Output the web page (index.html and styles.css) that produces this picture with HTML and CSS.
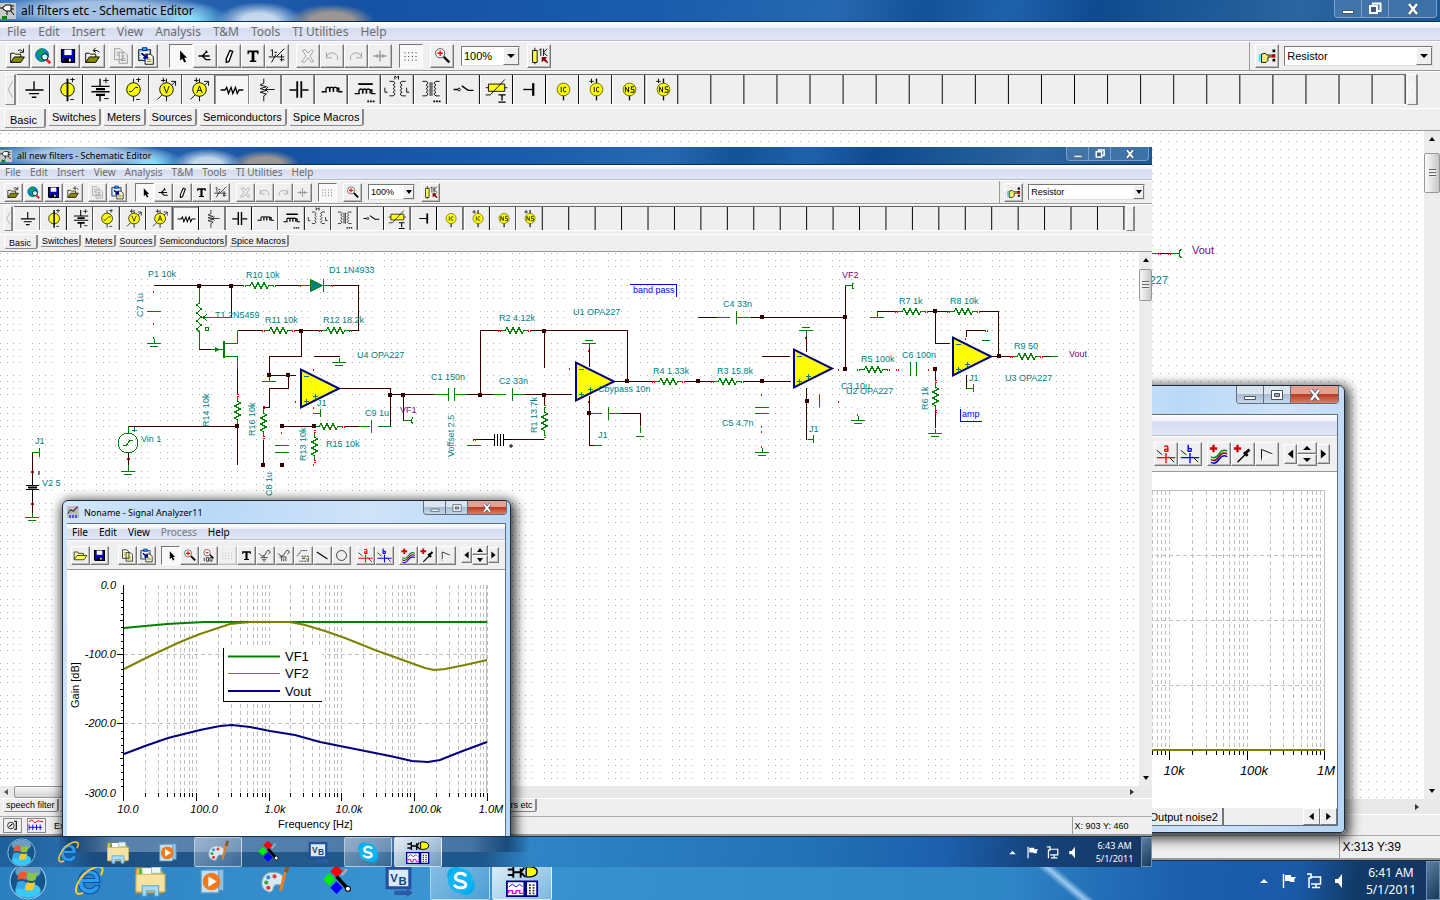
FILE: index.html
```html
<!DOCTYPE html>
<html lang="en">
  <head>
    <meta charset="UTF-8" />
    <meta name="viewport" content="width=device-width, initial-scale=1.0" />
    <title>all filters etc - Schematic Editor</title>
    <link rel="stylesheet" href="styles.css" />
  </head>
  <body>
    <!-- icon sprite -->
    <svg class="sprite" aria-hidden="true">
      <!-- toolbar, 24 x 24 -->
      <symbol id="open" viewBox="0 0 24 24"><path d="M4 9h4l1 1h6v3" fill="#ff9" stroke="#000"/><path d="M4 19l4-6h11l-4 6z" fill="#880" stroke="#000"/><path d="M4 9v10" stroke="#000"/><path d="M12 6q3-2 5 1m1-3v4h-4" fill="none" stroke="#000"/></symbol>
      <symbol id="openb" viewBox="0 0 24 24"><path d="M4 9h4l1 1h6v3" fill="#ff9" stroke="#000"/><path d="M4 19l4-6h11l-4 6z" fill="#880" stroke="#000"/><path d="M4 9v10" stroke="#000"/><path d="M19 8q-2-3-6-2m2-3l-3 3 3 2" fill="none" stroke="#000"/></symbol>
      <symbol id="open3" viewBox="0 0 24 24"><path d="M3 17V7h5l1 2h7v3" fill="#ff9" stroke="#000"/><path d="M3 18l4-6h14l-4 6z" fill="#ff6" stroke="#000"/></symbol>
      <symbol id="web" viewBox="0 0 24 24"><circle cx="11" cy="11" r="7" fill="#08c" stroke="#068"/><path d="M6 8l4-4 3 3-3 4-3-1zM9 13l4 1-1 4-4-2z" fill="#0a4"/><circle cx="14" cy="13" r="3.500" fill="#cff" stroke="#000"/><path d="M16 16l4 4" stroke="#e22" stroke-width="3"/></symbol>
      <symbol id="save" viewBox="0 0 24 24"><path d="M5 5h14v14H6l-1-1z" fill="#00c" stroke="#000" stroke-width="1.500"/><path d="M8 5h8v6H8z" fill="#fff"/><path d="M8 14h8v5H8z" fill="#000"/><path d="M13 15h2v3h-2z" fill="#fff"/></symbol>
      <symbol id="copy" viewBox="0 0 24 24"><path d="M5 4h6l3 3v9H5zM10 8h6l3 3v9h-9zM12 12h4M12 15h5M12 17h5M7 8h3M7 11h3" fill="#eee" stroke="#999"/></symbol>
      <symbol id="copy2" viewBox="0 0 24 24"><path d="M5 4h6l3 3v9H5zM10 8h6l3 3v9h-9z" fill="#ffd" stroke="#000"/><path d="M12 13h4M12 15h5M12 17h5M7 8h3M7 11h3" stroke="#880"/></symbol>
      <symbol id="paste" viewBox="0 0 24 24"><path d="M4 5h13v12H4z" fill="#fff" stroke="#000"/><path d="M5 6h11v10H5z" fill="none" stroke="#48c" stroke-dasharray="1 1" stroke-width="2"/><path d="M8 3h5v3H8z" fill="#0cf" stroke="#00a"/><path d="M11 10h6l3 3v8h-9z" fill="#ffd" stroke="#000"/><path d="M13 14h3M13 16h5M13 18h5" stroke="#880"/><path d="M7 9l6 5m0-4v4H9" stroke="#008" stroke-width="2" fill="none"/></symbol>
      <symbol id="pointer" viewBox="0 0 24 24"><path d="M11 6v11l2.500-2 2 4 2-1-2-4h3z" fill="#000"/></symbol>
      <symbol id="wire" viewBox="0 0 24 24"><path d="M5 12h8M9 12l4-4h1l-1-2M9 12l4 4h5M13 12h4" stroke="#000" stroke-width="1.500" fill="none"/></symbol>
      <symbol id="pencil" viewBox="0 0 24 24"><path d="M13 6l3 1-4 11-3 1v-4z" fill="#fff" stroke="#000" stroke-width="1.500"/></symbol>
      <symbol id="text" viewBox="0 0 24 24"><path d="M6 6h12v4h-1l-1-2h-2.500v9h2v1.500h-7V17h2V8H8l-1 2H6z" fill="#000"/></symbol>
      <symbol id="half" viewBox="0 0 24 24"><path d="M5 6l2-1v7M3 13h8l9-9M11 10l-5 9M12 13h8M17 10v8M15 16h5M9 8h3" stroke="#000" fill="none"/></symbol>
      <symbol id="del" viewBox="0 0 24 24"><path d="M6 6l3-1 3 4 4-4 2 2-4 5 4 6-2 1-4-5-4 5-3-1 5-6z" fill="#f4f4f4" stroke="#999"/></symbol>
      <symbol id="undo" viewBox="0 0 24 24"><path d="M6 13q3-6 8-4t4 7M6 8v6h6" fill="none" stroke="#999"/></symbol>
      <symbol id="redo" viewBox="0 0 24 24"><path d="M18 13q-3-6-8-4t-4 7M18 8v6h-6" fill="none" stroke="#999"/></symbol>
      <symbol id="break" viewBox="0 0 24 24"><path d="M5 12h14M12 6v12M9 10v4M15 10v4" fill="none" stroke="#999" stroke-width="1.500"/></symbol>
      <symbol id="dots" viewBox="0 0 24 24"><path d="M5 8.500h15M5 12.500h15M5 16.500h15" stroke="#000" stroke-dasharray="1 3"/></symbol>
      <symbol id="zoom" viewBox="0 0 24 24"><circle cx="10" cy="9" r="5" fill="#fff" stroke="#444"/><path d="M10 6v6M7 9h6" stroke="#f00" stroke-width="1.500"/><path d="M14 13l6 6" stroke="#000" stroke-width="2.500"/></symbol>
      <symbol id="zoom100" viewBox="0 0 24 24"><circle cx="10" cy="8" r="4.500" fill="#fff" stroke="#444"/><path d="M8 8h4" stroke="#f00" stroke-width="1.500"/><path d="M14 11l5 5" stroke="#000" stroke-width="2"/><path d="M6 15v5M9 15h3v5H9zM14 15h3v5h-3z" stroke="#000" fill="none"/></symbol>
      <symbol id="value" viewBox="0 0 24 24"><path d="M7.500 3v18" stroke="#000"/><path d="M5 6h5v13H5z" fill="#ff4" stroke="#000"/><path d="M12 6l2-2v8M17 4v8M21 4l-4 4 4 4" fill="none" stroke="#000"/><path d="M15 13h6l-2 2 3 4-1 1-4-3-2 2z" fill="#800"/></symbol>
      <symbol id="hand" viewBox="0 0 24 24"><path d="M4 10v8" stroke="#0ff" stroke-width="2"/><path d="M6 10l4-1 2 2h6v2h-5v4l-2 2H6z" fill="#fe6" stroke="#000"/><path d="M19.500 5v15" stroke="#000" stroke-width="3" stroke-dasharray="3 2"/><path d="M18 11h3v3h-3z" fill="#f00"/></symbol>
      <symbol id="meter" viewBox="0 0 24 24"><circle cx="9" cy="12" r="6" fill="#fff" stroke="#000" stroke-width="1.500"/><path d="M6 14l6-5M15 4h4v15h-4" fill="none" stroke="#000" stroke-width="2"/></symbol>
      <symbol id="probe1" viewBox="0 0 24 24"><path d="M3 9l4 4q4 0 6-5t4-3q4 2-1 5M5 15h10M7 18h6M9 20h2M10 12v3" fill="none" stroke="#000"/></symbol>
      <symbol id="probe2" viewBox="0 0 24 24"><path d="M3 9l4 4q4 0 6-5t4-3q4 2-1 5M5 14h9v6M8 14v6M11 16v4" fill="none" stroke="#000"/></symbol>
      <symbol id="legend" viewBox="0 0 24 24"><path d="M3 13l6-8h8M9 13h10v7H6" fill="none" stroke="#000" stroke-dasharray="3 1"/><path d="M10 16h4" stroke="#080" stroke-width="2"/><path d="M15 16l4 3" stroke="#c00"/></symbol>
      <symbol id="line" viewBox="0 0 24 24"><path d="M4 7l15 10" stroke="#000" stroke-width="1.500"/></symbol>
      <symbol id="circle" viewBox="0 0 24 24"><circle cx="12" cy="12" r="7" fill="none" stroke="#000"/></symbol>
      <symbol id="cura" viewBox="0 0 24 24"><path d="M2 8l6 5M15 15l6 6" stroke="#000"/><path d="M2 16h20M12 11v11M10 4q4-2 4 1v4h-3q-2-3 3-2" stroke="#f00" fill="none" stroke-width="1.500"/></symbol>
      <symbol id="curb" viewBox="0 0 24 24"><path d="M2 8l6 5M15 15l6 6" stroke="#000"/><path d="M2 16h20M12 11v11M10 2v7h3q2-4-3-3" stroke="#00f" fill="none" stroke-width="1.500"/></symbol>
      <symbol id="curves" viewBox="0 0 24 24"><path d="M6 2v8M2 6h8" stroke="#c00" stroke-width="2.500"/><path d="M3 15q5 3 9-3t9-3" fill="none" stroke="#080" stroke-width="1.500"/><path d="M3 18q5 3 9-3t9-3" fill="none" stroke="#800" stroke-width="1.500"/><path d="M3 21q5 3 9-3t9-3" fill="none" stroke="#00f" stroke-width="1.500"/></symbol>
      <symbol id="pick" viewBox="0 0 24 24"><path d="M6 2v8M2 6h8" stroke="#c00" stroke-width="2.500"/><path d="M6 21l9-9" stroke="#000" stroke-width="1.500"/><path d="M13 10l4 4M14 12l5-5" stroke="#000" stroke-width="3"/></symbol>
      <symbol id="flag3" viewBox="0 0 24 24"><path d="M6 19V7l12 5" fill="none" stroke="#000"/><path d="M18 12L6 18" stroke="#fff" stroke-width="1.500"/></symbol>
      <symbol id="triL" viewBox="0 0 12 20"><path d="M9 5v10L3 10z"/></symbol>
      <symbol id="triR" viewBox="0 0 12 20"><path d="M3 5v10l6-5z"/></symbol>

      <!-- component palette, 33 x 32 -->
      <symbol id="c-gnd" viewBox="0 0 33 32"><path d="M16.500 7v9M7 16.500h20M11 20.500h11M14 24.500h5" stroke="#000" stroke-width="1.500"/></symbol>
      <symbol id="c-vsrc" viewBox="0 0 33 32"><circle cx="17" cy="16" r="7.500" fill="#ff0" stroke="#000"/><path d="M17 4v25" stroke="#000" stroke-width="2"/><path d="M20 5h5M22.500 3v5M20 27h4" stroke="#000"/></symbol>
      <symbol id="c-bat" viewBox="0 0 33 32"><path d="M16.500 4v8M16.500 22v7M7 12.500h20M7 18.500h20" stroke="#000" stroke-width="1.500"/><path d="M12 15.500h10M12 22h10" stroke="#000" stroke-width="2.500"/><path d="M20 6h6M23 3v6M21 26h5" stroke="#000"/></symbol>
      <symbol id="c-gen" viewBox="0 0 33 32"><path d="M17 4v25" stroke="#000"/><circle cx="17" cy="16" r="7.500" fill="#ff0" stroke="#000"/><path d="M12 18q3 2 5-2t5-2M20 5h5M22.500 3v5M20 27h4" stroke="#000" fill="none"/></symbol>
      <symbol id="c-volt" viewBox="0 0 33 32"><path d="M17 4v25M7 27L27 7M22 7h5v5M11 6h5M13.500 3v5" stroke="#000" fill="none"/><circle cx="17" cy="16" r="7.500" fill="#ff0" stroke="#000"/><path d="M14 12l3 8 3-8" stroke="#000" fill="none"/></symbol>
      <symbol id="c-amp" viewBox="0 0 33 32"><path d="M17 4v25M7 27L27 7M22 7h5v5M11 6h5M13.500 3v5" stroke="#000" fill="none"/><circle cx="17" cy="16" r="7.500" fill="#ff0" stroke="#000"/><path d="M14 20l3-8 3 8M15 17h4" stroke="#000" fill="none"/></symbol>
      <symbol id="c-res" viewBox="0 0 33 32"><path d="M4 16h5l2-3 2 7 3-7 2 7 3-7 2 7 2-4h5" stroke="#000" fill="none" stroke-width="1.500"/></symbol>
      <symbol id="c-pot" viewBox="0 0 33 32"><path d="M14 4v5l-4 2 7 2-7 2 7 2-7 2 7 2-3 2v6M26 16H16m3-3l-3 3 3 3" stroke="#000" fill="none"/></symbol>
      <symbol id="c-cap" viewBox="0 0 33 32"><path d="M6 16.500h8M20 16.500h7" stroke="#000" stroke-width="1.500"/><path d="M14.500 7v18M19 7v18" stroke="#000" stroke-width="2"/></symbol>
      <symbol id="c-ind" viewBox="0 0 33 32"><path d="M5 18.500h5q-1-5 2-5t2 5q-1-5 2-5t2 5q-1-5 2-5t2 5q0-5 2-4v4h4" stroke="#000" fill="none" stroke-width="1.500"/></symbol>
      <symbol id="c-core" viewBox="0 0 33 32"><path d="M9 10h16" stroke="#000" stroke-width="2"/><path d="M5 20.500h5q-1-5 2-5t2 5q-1-5 2-5t2 5q-1-5 2-5t2 5q0-5 2-4v4h4" stroke="#000" fill="none" stroke-width="1.500"/><path d="M19 29h8" stroke="#000" stroke-width="2" stroke-dasharray="2 1"/></symbol>
      <symbol id="c-coup" viewBox="0 0 33 32"><path d="M7 7h4q4 2 0 4 4 2 0 4 4 2 0 4 4 2 0 4H7M25 7h-4q-4 2 0 4-4 2 0 4-4 2 0 4-4 2 0 4h4M13 5V1l2 2 2-2v4M2 14v5h3M26 14v5h3" stroke="#000" fill="none"/></symbol>
      <symbol id="c-trafo" viewBox="0 0 33 32"><path d="M7 7h4q4 2 0 4 4 2 0 4 4 2 0 4 4 2 0 4H7M26 7h-4q-4 2 0 4-4 2 0 4-4 2 0 4-4 2 0 4h4M15.500 8v15M17.500 8v15" stroke="#000" fill="none"/><path d="M19 29h8" stroke="#000" stroke-width="2" stroke-dasharray="2 1"/></symbol>
      <symbol id="c-sw" viewBox="0 0 33 32"><path d="M5 16h5M14 12l7 5h6" stroke="#000" fill="none" stroke-width="1.500"/><circle cx="11" cy="16" r="1.500" fill="none" stroke="#000"/></symbol>
      <symbol id="c-therm" viewBox="0 0 33 32"><path d="M4 14h24" stroke="#000"/><path d="M7 10h18v8H7z" fill="#ff0" stroke="#000"/><path d="M4 22h5L25 5" stroke="#000" fill="none"/><path d="M18 22h8M22 22v6M18 30h8" stroke="#000" stroke-width="1.500"/></symbol>
      <symbol id="c-jmp" viewBox="0 0 33 32"><path d="M9 16h10" stroke="#000" stroke-width="1.500"/><path d="M20 9v14" stroke="#000" stroke-width="2.500"/></symbol>
      <symbol id="c-ic" viewBox="0 0 33 32"><path d="M17 20v8" stroke="#000" stroke-width="1.500"/><circle cx="17" cy="16" r="7" fill="#ff0" stroke="#660"/><path d="M14.500 13v6M20 14q-3-2-3 2t3 2" stroke="#000" fill="none"/></symbol>
      <symbol id="c-icp" viewBox="0 0 33 32"><path d="M17 4v24" stroke="#000" stroke-width="1.500"/><path d="M9 7h5M11.500 4v5" stroke="#000"/><circle cx="17" cy="16" r="7" fill="#ff0" stroke="#660"/><path d="M14.500 13v6M20 14q-3-2-3 2t3 2" stroke="#000" fill="none"/></symbol>
      <symbol id="c-ns" viewBox="0 0 33 32"><path d="M17 20v8" stroke="#000" stroke-width="1.500"/><circle cx="17" cy="16" r="7" fill="#ff0" stroke="#660"/><path d="M12.500 19v-6l3.500 6v-6M22 13h-3v3h3v3h-4" stroke="#000" fill="none"/></symbol>
      <symbol id="c-nsp" viewBox="0 0 33 32"><path d="M17 4v24" stroke="#000" stroke-width="1.500"/><path d="M9 7h5M11.500 4v5" stroke="#000"/><circle cx="17" cy="16" r="7" fill="#ff0" stroke="#660"/><path d="M12.500 19v-6l3.500 6v-6M22 13h-3v3h3v3h-4" stroke="#000" fill="none"/></symbol>

      <!-- window icons -->
      <symbol id="tina" viewBox="0 0 16 16"><path d="M0 0h16v16H0z" fill="#c8c8c8"/><path d="M3 4l3-2h5v6H6L3 6zM0 5h3M11 3h3M11 6h3M7 8v4M11 8l3 4" fill="#fff" stroke="#000"/><path d="M2 13h5v3H2z" fill="#080"/></symbol>
      <symbol id="graph" viewBox="0 0 16 16"><path d="M0 0h16v16H0z" fill="#c0c0c0"/><path d="M1 10l4-5 3 2 6-6" stroke="#606" fill="none" stroke-width="1.500"/><path d="M1 6l4 3 4-2 5 2" stroke="#0e0" fill="none" stroke-dasharray="2 1"/><path d="M4 12v4M8 12v4M12 12v4" stroke="#00f" stroke-width="1.500"/></symbol>
      <symbol id="w-min" viewBox="0 0 16 16"><path d="M2.500 9.500h11v3h-11z" fill="#fff" stroke="#456"/></symbol>
      <symbol id="w-max" viewBox="0 0 16 16"><path d="M6 2.500h7.500V10H6z" fill="none" stroke="#fff" stroke-width="2"/><path d="M3 5h7v7H3z" fill="#457" stroke="#fff" stroke-width="2"/></symbol>
      <symbol id="w-box" viewBox="0 0 16 16"><path d="M2.500 3.500h11v9h-11z" fill="#fff" stroke="#456"/><path d="M5.500 6.500h5v3h-5z" fill="#9ab" stroke="#456"/></symbol>
      <symbol id="w-x" viewBox="0 0 16 16"><path d="M4 3l8 10M12 3L4 13" stroke="#456" stroke-width="4"/><path d="M4 3l8 10M12 3L4 13" stroke="#fff" stroke-width="2.500"/></symbol>

      <!-- taskbar, 32 x 32 -->
      <symbol id="orb" viewBox="0 0 36 36"><circle cx="18" cy="18" r="17" fill="#17548c" stroke="#9cd0ee"/><ellipse cx="18" cy="27" rx="12" ry="7" fill="#3bc8f4"/><ellipse cx="18" cy="9" rx="12" ry="7" fill="#6d9fc4"/><path d="M9 11q4-3 8-1l-1 7q-4-2-8 0z" fill="#f0582a"/><path d="M18 10q4 2 9 0l-2 7q-4 2-8 0z" fill="#8cc63f"/><path d="M8 19q4-2 8 0l-2 7q-4-2-8 0z" fill="#38a5e8"/><path d="M17 19q4 2 8 0l-2 7q-4 2-8 0z" fill="#fdc82f"/></symbol>
      <symbol id="ie" viewBox="0 0 32 32"><path d="M27 18H11q1 6 6 6 4 0 5-3h5q-2 8-10 8-11-1-11-12Q7 6 17 6q10 0 10 12zM11 14h11q-1-4-5-4t-6 4z" fill="#2a9df0" stroke="#0c4e9c"/><path d="M28 11Q33 1 23 3 11 7 5 20q-4 12 6 8" fill="none" stroke="#f8c63a" stroke-width="2"/></symbol>
      <symbol id="folder" viewBox="0 0 32 32"><path d="M2 4h10l2 3h14v21H2z" fill="#e8c45a" stroke="#b8902c"/><path d="M5 5h8v5H5z" fill="#4b4"/><path d="M8 4h9v6H8z" fill="#fff"/><path d="M17 3h9v6h-9z" fill="#eef6ee" stroke="#9bc"/><path d="M2 10h28v17H2z" fill="#f7e3a0" stroke="#d8b45c"/><path d="M8 31V21h16v10h-4v-5h-8v5z" fill="#a8dcf4" stroke="#5aa6d0"/></symbol>
      <symbol id="media" viewBox="0 0 32 32"><path d="M10 5h17v21H10z" fill="#8fc0e0" stroke="#4f88b4"/><path d="M5 6h17v22H5z" fill="#c4e0f0" stroke="#6aa0c4"/><circle cx="15" cy="17" r="8.500" fill="#f27a1a"/><path d="M12 12v10l8-5z" fill="#fff"/></symbol>
      <symbol id="paint" viewBox="0 0 32 32"><path d="M14 8q12 0 11 10-1 3-5 2t-5 3q-1 5-5 4Q2 24 4 16q2-8 10-8z" fill="#d8e8f4" stroke="#8ab"/><circle cx="10" cy="13" r="2" fill="#3a8ee0"/><circle cx="16" cy="12" r="2" fill="#e04030"/><circle cx="8" cy="18" r="2" fill="#3a3"/><circle cx="10" cy="23" r="2" fill="#d33"/><path d="M27 5l-5 21" stroke="#d9822b" stroke-width="3"/><path d="M29 1l-2 7" stroke="#8b5a2b" stroke-width="4"/></symbol>
      <symbol id="gems" viewBox="0 0 32 32"><path d="M16 1l6 6-6 6-6-6z" fill="#f00"/><path d="M9 9l6 6-6 6-6-6z" fill="#0e0"/><path d="M16 17l6 6-6 6-6-6z" fill="#00f"/><path d="M16 12l10 11" stroke="#000" stroke-width="3.500"/><circle cx="27" cy="24" r="2.500" fill="#fff" stroke="#000"/><path d="M21 11l5-6" stroke="#aaa" stroke-width="2.500"/></symbol>
      <symbol id="skype" viewBox="0 0 32 32"><circle cx="11" cy="11" r="8" fill="#00aff0"/><circle cx="21" cy="21" r="9" fill="#00aff0"/><circle cx="16" cy="16" r="12" fill="#12b4f2"/><path d="M21 12q-1-3-5-3t-5 3.500q0 3 5 4t5 3.500q0 3-5 3t-6-3" fill="none" stroke="#fff" stroke-width="3"/></symbol>
      <symbol id="tinabig" viewBox="0 0 36 36"><path d="M2 6h6M2 12h6M8 3v12M8 9h8l4-5M16 5v10M16 9l5 5" stroke="#000" stroke-width="2" fill="none"/><path d="M22 3h5q7 1 7 5.500T27 14h-5z" fill="#ff0" stroke="#000" stroke-width="1.500"/><path d="M1 19h19v16H1zM22 19h12v16H22z" fill="#fff" stroke="#008" stroke-width="2"/><path d="M3 25l4-3 4 3 4-3 3 3" stroke="#00a" fill="none"/><path d="M3 32v-3h4v3h4v-3h4v3h4" stroke="#e0e" fill="none" stroke-width="1.500"/><path d="M26 22v11M30 22v11" stroke="#333" stroke-width="2" stroke-dasharray="2 1"/></symbol>
      <symbol id="t-up" viewBox="0 0 16 16"><path d="M4 10h8L8 6z" fill="#fff"/></symbol>
      <symbol id="t-flag" viewBox="0 0 16 16"><path d="M2.500 1v14" stroke="#fff" stroke-width="1.500"/><path d="M4 2h6v2h5l-2 3 1 2H9V8H4z" fill="#fff"/></symbol>
      <symbol id="t-net" viewBox="0 0 16 16"><path d="M4 4h10.500v7H5M10 11v3M6 14.500h8" stroke="#fff" fill="none" stroke-width="1.500"/><path d="M1 1h4v4H3v10" fill="none" stroke="#fff" stroke-width="1.500"/></symbol>
      <symbol id="t-snd" viewBox="0 0 16 16"><path d="M4 6h3l4-5v14l-4-5H4z" fill="#fff"/></symbol>

      <!-- schematic parts, centred on 0,0 -->
      <g id="res"><path class="g" d="M-14 0h4l2-3 3 6 3-6 3 6 3-6 3 6 2-3h4"/><path class="pin" d="M-17 0h4M13 0h4"/></g>
      <g id="gnd"><path class="g" d="M-7 .5h14M-4 3.500h8M0 .5v-5"/></g>
      <g id="opamp"><path d="M-19-19.500v38L19-.5z" fill="#ff0" stroke="#000080" stroke-width="2"/><path class="t" d="M-16-12.500h5M-7 7.500h5M-4.500 5v5M-16 12.500h5M-13.500 10v5"/></g>
      <path id="decade" class="grid" d="M22.500 0V208M35.500 0V208M44.500 0V208M51.500 0V208M57.500 0V208M61.500 0V208M66.500 0V208M69.500 0V208M73.500 0V208"/>
      <path id="ticks" class="axis" d="M22.500 0v4M35.500 0v4M44.500 0v4M51.500 0v4M57.500 0v4M61.500 0v4M66.500 0v4M69.500 0v4M73.500 0v8"/>
    </svg>

    <div class="screen">
      <main class="editor">
        <header class="titlebar">
          <svg class="app-icon"><use href="#tina" /></svg>
          <span class="caption">all filters etc - Schematic Editor</span>
          <div class="win-btns">
            <button aria-label="Minimize"><svg><use href="#w-min" /></svg></button>
            <button aria-label="Restore"><svg><use href="#w-max" /></svg></button>
            <button class="close" aria-label="Close"><svg><use href="#w-x" /></svg></button>
          </div>
        </header>
        <nav class="menubar">
          <a href="#">File</a><a href="#">Edit</a><a href="#">Insert</a><a href="#">View</a><a href="#">Analysis</a><a href="#">T&amp;M</a><a href="#">Tools</a><a href="#">TI Utilities</a><a href="#">Help</a>
        </nav>
        <div class="toolbar">
          <div class="group spaced">
            <button aria-label="Open"><svg><use href="#open" /></svg></button>
            <button aria-label="Open from web"><svg><use href="#web" /></svg></button>
            <button aria-label="Save"><svg><use href="#save" /></svg></button>
            <button aria-label="Close file"><svg><use href="#openb" /></svg></button>
          </div>
          <div class="group spaced">
            <button aria-label="Copy"><svg><use href="#copy" /></svg></button>
            <button aria-label="Paste"><svg><use href="#paste" /></svg></button>
          </div>
          <div class="group tools">
            <button class="pressed" aria-label="Select"><svg><use href="#pointer" /></svg></button>
            <button aria-label="Last component"><svg><use href="#wire" /></svg></button>
            <button aria-label="Wire"><svg><use href="#pencil" /></svg></button>
            <button aria-label="Text"><svg><use href="#text" /></svg></button>
            <button aria-label="Hide values"><svg><use href="#half" /></svg></button>
          </div>
          <div class="group">
            <button aria-label="Delete"><svg><use href="#del" /></svg></button>
            <button aria-label="Undo"><svg><use href="#undo" /></svg></button>
            <button aria-label="Redo"><svg><use href="#redo" /></svg></button>
            <button aria-label="Break"><svg><use href="#break" /></svg></button>
          </div>
          <div class="group"><button class="pressed" aria-label="Grid"><svg><use href="#dots" /></svg></button></div>
          <div class="group"><button aria-label="Zoom"><svg><use href="#zoom" /></svg></button></div>
          <div class="combo scale">
            <select aria-label="Zoom level"><option>100%</option></select><span class="arrow"></span>
          </div>
          <div class="group"><button aria-label="Show values"><svg><use href="#value" /></svg></button></div>
          <div class="finder">
            <button aria-label="Find component"><svg><use href="#hand" /></svg></button>
            <div class="combo">
              <select aria-label="Component"><option>Resistor</option></select><span class="arrow"></span>
            </div>
          </div>
        </div>
        <div class="palette">
          <button class="nudge" aria-label="Previous"><svg viewBox="0 0 10 30"><path d="M8 5L3 15l5 10" fill="none" stroke="#999"/></svg></button>
          <div class="cells">
            <button aria-label="Ground"><svg><use href="#c-gnd" /></svg></button>
            <button aria-label="Voltage source"><svg><use href="#c-vsrc" /></svg></button>
            <button aria-label="Battery"><svg><use href="#c-bat" /></svg></button>
            <button aria-label="Generator"><svg><use href="#c-gen" /></svg></button>
            <button aria-label="Voltmeter"><svg><use href="#c-volt" /></svg></button>
            <button aria-label="Ammeter"><svg><use href="#c-amp" /></svg></button>
            <button class="on" aria-label="Resistor"><svg><use href="#c-res" /></svg></button>
            <button aria-label="Potentiometer"><svg><use href="#c-pot" /></svg></button>
            <button aria-label="Capacitor"><svg><use href="#c-cap" /></svg></button>
            <button aria-label="Inductor"><svg><use href="#c-ind" /></svg></button>
            <button aria-label="Core inductor"><svg><use href="#c-core" /></svg></button>
            <button aria-label="Coupled inductors"><svg><use href="#c-coup" /></svg></button>
            <button aria-label="Transformer"><svg><use href="#c-trafo" /></svg></button>
            <button aria-label="Switch"><svg><use href="#c-sw" /></svg></button>
            <button aria-label="Thermistor"><svg><use href="#c-therm" /></svg></button>
            <button aria-label="Jumper"><svg><use href="#c-jmp" /></svg></button>
            <button aria-label="Initial condition"><svg><use href="#c-ic" /></svg></button>
            <button aria-label="Initial condition 2"><svg><use href="#c-icp" /></svg></button>
            <button aria-label="Nodeset"><svg><use href="#c-ns" /></svg></button>
            <button aria-label="Nodeset 2"><svg><use href="#c-nsp" /></svg></button>
          </div>
          <button class="nudge" aria-label="Next"><svg viewBox="0 0 10 30"><path d="M2 5v20M3 5l5 10-5 10" fill="none" stroke="#fff"/></svg></button>
        </div>
        <div class="tabs">
          <button class="active">Basic</button><button>Switches</button><button>Meters</button><button>Sources</button><button>Semiconductors</button><button>Spice Macros</button>
        </div>
        <div class="work">
          <div class="sheet">
            <svg class="drawing" viewBox="0 131 1424 668" width="1424" height="668">
              <path class="g" d="M1152 253.500h27M1182 249l-3 2v5l3 2" />
              <path class="w" d="M1160 253.500h10" /><path class="pin" d="M1158 253.500h3M1168 253.500h3" />
              <text class="purple big" x="1192" y="254">Vout</text>
              <text class="big" x="1168" y="284" text-anchor="end">U3 OPA227</text>
            </svg>
          </div>
          <div class="vscroll"><i class="up"></i><i class="thumb"></i><i class="down"></i></div>
        </div>
        <div class="hscroll"><i class="fwd"></i></div>
        <div class="sheets"></div>
        <footer class="status"><span class="coords">X:313 Y:39</span></footer>
      </main>

      <section class="analyzer noise">
        <header class="glass">
          <div class="win-btns">
            <button aria-label="Minimize"><svg><use href="#w-min" /></svg></button>
            <button aria-label="Maximize"><svg><use href="#w-box" /></svg></button>
            <button class="close" aria-label="Close"><svg><use href="#w-x" /></svg></button>
          </div>
        </header>
        <div class="pane">
          <nav class="menubar"></nav>
          <div class="toolbar">
            <div class="group">
              <button aria-label="Cursor a"><svg><use href="#cura" /></svg></button>
              <button aria-label="Cursor b"><svg><use href="#curb" /></svg></button>
            </div>
            <div class="group">
              <button aria-label="Add curves"><svg><use href="#curves" /></svg></button>
              <button aria-label="Pick curve"><svg><use href="#pick" /></svg></button>
              <button aria-label="Marker"><svg><use href="#flag3" /></svg></button>
            </div>
            <div class="spin">
              <button aria-label="Left"><svg><use href="#triL" /></svg></button>
              <span><button aria-label="Up"><i class="up"></i></button><button aria-label="Down"><i class="down"></i></button></span>
              <button aria-label="Right"><svg><use href="#triR" /></svg></button>
            </div>
          </div>
          <svg class="plot" viewBox="1088 472 248 335" width="248" height="335">
            <path class="grid" d="M1115.500 491V749M1129.500 491V749M1138.500 491V749M1146.500 491V749M1152.500 491V749M1157.500 491V749M1161.500 491V749M1165.500 491V749M1169.500 491V749M1192.500 491V749M1206.500 491V749M1216.500 491V749M1223.500 491V749M1229.500 491V749M1234.500 491V749M1239.500 491V749M1243.500 491V749M1247.500 491V749M1270.500 491V749M1283.500 491V749M1293.500 491V749M1301.500 491V749M1307.500 491V749M1312.500 491V749M1316.500 491V749M1320.500 491V749M1085 555.500H1324M1085 620.500H1324M1085 685.500H1324" />
            <path d="M1085 490.500H1324.500V750" fill="none" stroke="#c0c0c0" />
            <path class="axis" d="M1152.500 751v4M1157.500 751v4M1161.500 751v4M1165.500 751v4M1169.500 751v9M1192.500 751v4M1206.500 751v4M1216.500 751v4M1223.500 751v4M1229.500 751v4M1234.500 751v4M1239.500 751v4M1243.500 751v4M1247.500 751v9M1270.500 751v4M1283.500 751v4M1293.500 751v4M1301.500 751v4M1307.500 751v4M1312.500 751v4M1316.500 751v4M1320.500 751v4M1324.500 751v9" />
            <path d="M1085 750H1325" stroke="#808000" stroke-width="2" />
            <text class="tick big" x="1174" y="775">10k</text>
            <text class="tick big" x="1254" y="775">100k</text>
            <text class="tick big" x="1326" y="775">1M</text>
          </svg>
          <div class="foot"><button class="out">Output noise2</button><button class="step" aria-label="Previous tab"><svg><use href="#triL" /></svg></button><button class="step" aria-label="Next tab"><svg><use href="#triR" /></svg></button></div>
        </div>
      </section>

      <footer class="taskbar">
        <button class="start" aria-label="Start"><svg><use href="#orb" /></svg></button>
        <button aria-label="Internet Explorer"><svg><use href="#ie" /></svg></button>
        <button aria-label="Explorer"><svg><use href="#folder" /></svg></button>
        <button aria-label="Media Player"><svg><use href="#media" /></svg></button>
        <button aria-label="Paint"><svg><use href="#paint" /></svg></button>
        <button aria-label="Designer"><svg><use href="#gems" /></svg></button>
        <button class="vb" aria-label="Visual Basic"><svg viewBox="0 0 32 32"><path d="M5 4h22v19H5z" fill="#dcebfa" stroke="#234f9c" stroke-width="3"/><path d="M12 26h12v-3l6 5-6 4v-2H12z" fill="#2c5aa8"/><text x="8" y="17">V</text><text x="16" y="20">B</text></svg></button>
        <button class="running" aria-label="Skype"><svg><use href="#skype" /></svg></button>
        <button class="running lit" aria-label="TINA"><svg><use href="#tinabig" /></svg></button>
        <div class="tray">
          <svg><use href="#t-up" /></svg><svg><use href="#t-flag" /></svg><svg><use href="#t-net" /></svg><svg><use href="#t-snd" /></svg>
          <div class="clock">6:41 AM<br />5/1/2011</div>
          <button class="peek" aria-label="Show desktop"></button>
        </div>
      </footer>

      <div class="screen small">
        <div class="editor">
          <header class="titlebar">
            <svg class="app-icon"><use href="#tina" /></svg>
            <span class="caption">all new filters - Schematic Editor</span>
            <div class="win-btns">
              <button aria-label="Minimize"><svg><use href="#w-min" /></svg></button>
              <button aria-label="Restore"><svg><use href="#w-max" /></svg></button>
              <button class="close" aria-label="Close"><svg><use href="#w-x" /></svg></button>
            </div>
          </header>
          <nav class="menubar">
            <a href="#">File</a><a href="#">Edit</a><a href="#">Insert</a><a href="#">View</a><a href="#">Analysis</a><a href="#">T&amp;M</a><a href="#">Tools</a><a href="#">TI Utilities</a><a href="#">Help</a>
          </nav>
          <div class="toolbar">
            <div class="group spaced">
              <button aria-label="Open"><svg><use href="#open" /></svg></button>
              <button aria-label="Open from web"><svg><use href="#web" /></svg></button>
              <button aria-label="Save"><svg><use href="#save" /></svg></button>
              <button aria-label="Close file"><svg><use href="#openb" /></svg></button>
            </div>
            <div class="group spaced">
              <button aria-label="Copy"><svg><use href="#copy" /></svg></button>
              <button aria-label="Paste"><svg><use href="#paste" /></svg></button>
            </div>
            <div class="group tools">
              <button class="pressed" aria-label="Select"><svg><use href="#pointer" /></svg></button>
              <button aria-label="Last component"><svg><use href="#wire" /></svg></button>
              <button aria-label="Wire"><svg><use href="#pencil" /></svg></button>
              <button aria-label="Text"><svg><use href="#text" /></svg></button>
              <button aria-label="Hide values"><svg><use href="#half" /></svg></button>
            </div>
            <div class="group">
              <button aria-label="Delete"><svg><use href="#del" /></svg></button>
              <button aria-label="Undo"><svg><use href="#undo" /></svg></button>
              <button aria-label="Redo"><svg><use href="#redo" /></svg></button>
              <button aria-label="Break"><svg><use href="#break" /></svg></button>
            </div>
            <div class="group"><button class="pressed" aria-label="Grid"><svg><use href="#dots" /></svg></button></div>
            <div class="group"><button aria-label="Zoom"><svg><use href="#zoom" /></svg></button></div>
            <div class="combo scale">
              <select aria-label="Zoom level"><option>100%</option></select><span class="arrow"></span>
            </div>
            <div class="group"><button aria-label="Show values"><svg><use href="#value" /></svg></button></div>
            <div class="finder">
              <button aria-label="Find component"><svg><use href="#hand" /></svg></button>
              <div class="combo">
                <select aria-label="Component"><option>Resistor</option></select><span class="arrow"></span>
              </div>
            </div>
          </div>
          <div class="palette">
            <button class="nudge" aria-label="Previous"><svg viewBox="0 0 10 30"><path d="M8 5L3 15l5 10" fill="none" stroke="#999"/></svg></button>
            <div class="cells">
              <button aria-label="Ground"><svg><use href="#c-gnd" /></svg></button>
              <button aria-label="Voltage source"><svg><use href="#c-vsrc" /></svg></button>
              <button aria-label="Battery"><svg><use href="#c-bat" /></svg></button>
              <button aria-label="Generator"><svg><use href="#c-gen" /></svg></button>
              <button aria-label="Voltmeter"><svg><use href="#c-volt" /></svg></button>
              <button aria-label="Ammeter"><svg><use href="#c-amp" /></svg></button>
              <button class="on" aria-label="Resistor"><svg><use href="#c-res" /></svg></button>
              <button aria-label="Potentiometer"><svg><use href="#c-pot" /></svg></button>
              <button aria-label="Capacitor"><svg><use href="#c-cap" /></svg></button>
              <button aria-label="Inductor"><svg><use href="#c-ind" /></svg></button>
              <button aria-label="Core inductor"><svg><use href="#c-core" /></svg></button>
              <button aria-label="Coupled inductors"><svg><use href="#c-coup" /></svg></button>
              <button aria-label="Transformer"><svg><use href="#c-trafo" /></svg></button>
              <button aria-label="Switch"><svg><use href="#c-sw" /></svg></button>
              <button aria-label="Thermistor"><svg><use href="#c-therm" /></svg></button>
              <button aria-label="Jumper"><svg><use href="#c-jmp" /></svg></button>
              <button aria-label="Initial condition"><svg><use href="#c-ic" /></svg></button>
              <button aria-label="Initial condition 2"><svg><use href="#c-icp" /></svg></button>
              <button aria-label="Nodeset"><svg><use href="#c-ns" /></svg></button>
              <button aria-label="Nodeset 2"><svg><use href="#c-nsp" /></svg></button>
            </div>
            <button class="nudge" aria-label="Next"><svg viewBox="0 0 10 30"><path d="M2 5v20M3 5l5 10-5 10" fill="none" stroke="#fff"/></svg></button>
          </div>
          <div class="tabs">
            <button class="active">Basic</button><button>Switches</button><button>Meters</button><button>Sources</button><button>Semiconductors</button><button>Spice Macros</button>
          </div>
          <div class="work">
            <div class="sheet">
              <svg class="drawing" viewBox="0 252 1139 534" width="1139" height="534">
                <!-- wires -->
                <path class="w" d="M154 285.500H244M231.500 285V317M275 285.500H301M330 285.500H358.500V330.500H350M199 349.500H211M237.500 330.500H263M295 330.500H322M301.500 330V356.500H269.500V375.500H296M288.500 375V388.500H269.500V407.500H263M263.500 440V465M237.500 369V395M128 426.500H237.500M237.500 426V464.500M314 356.500H340M128.500 453V465M32.500 452V480M32.500 497V513M339 388.500H390.500V426M390 394.500H435M403.500 394V420.500M282 426.500H314M344 426.500H360M467 394.500H493M480.500 394V330.500H500M530 330.500H627.500V381M544.500 330V368M525 394.500H572M544.500 394V406M544 439.500H512M474 439.500H482M589.500 347V367M589.500 396V445.500H596M620 413.500H640.500V426M614 381.500H655M684 381.500H714M743 381.500H791M698 317.500H717M750 317.500H845M845.500 286V369M762 356.500H790M806.500 337V352M806.500 388V439.500M877 311.500H897M927 311.500H949M935.500 311V343.500H950M980 311.500H998.500V356M966.500 337V330.500H986M966.500 375V388.500M992 356.500H1012M1043 356.500H1052M935.500 369V381M935.500 411V428" />
                <!-- component bodies -->
                <path class="g" d="M301 285.500h30M323.500 279v13M199.500 286V303l-3 2 5 4-5 4 5 4-5 4 5 4-5 4 3 3V349M231 317.500H203m4-3l-4 3 4 3M211 349.500H224M224 343.500H237.500V331M224 356.500H237.500V369M147 311.500h14M262 381.500h14M269.500 375v6M275 445.500h14M275 452.500h14M313 413.500h7M320.500 409v8M359 426.500h11M371.500 420v13M378 426.500h13M404 420.500h7l2-3M411 421l2 3M434 394.500h14M448.500 388v13M454.500 388v13M455 394.500h12M493 394.500h13M512.500 388v13M513 394.500h12M467 445.500h14M582 343.500h14M585 340.500h8M589.500 343v5M589 413.500h13M608.500 407v13M608 413.500h13M640.500 427v6M636 436.500h8M594 445.500h8M717 317.500h13M736.500 311v13M737 317.500h12M845 285.500h7M854 283l-2 1v4l2 1M755 407.500h14M755 413.500h14M799 330.500h14M802 327.500h8M806.500 330v7M808 439.500h6M813.500 435v8M819.500 394v13M870 317.500h14M877.500 312v5M910.500 362v14M916.500 362v14M982 340.500h8M967 388.500h6M973.500 384v8M1050 356.500h8M32 452.500h7M39.500 448v9M128.500 426v7M128.500 465v6" />
                <path d="M310.500 279.500v12l12-6z" fill="#008080" stroke="#008000" />
                <path d="M224 341v17" stroke="#008000" stroke-width="2" /><path d="M215 347l5 2.500-5 2.500z" fill="#008000" />
                <circle class="g" cx="207" cy="329" r="2" /><circle class="g" cx="128" cy="443" r="10" /><path class="g" d="M123 445q3 2 5-2t5-2" />
                <path d="M26 485.500h13M26 489.500h13M32.500 478v7M32.500 490v10M482 439.500h12M504 439.500h8M494.500 434v12M497.500 434v12M500.500 434v12M503.500 434v12M39 471v4M509 446h4M511 444v4" stroke="#000" />
                <path d="M28 487.500h9" stroke="#000" stroke-width="2" />
                <use href="#res" x="260" y="285.500" /><use href="#res" x="279" y="330.500" /><use href="#res" x="336" y="330.500" /><use href="#res" x="329" y="426.500" />
                <use href="#res" x="515" y="330.500" /><use href="#res" x="669" y="381.500" /><use href="#res" x="728" y="381.500" /><use href="#res" x="874" y="369.500" />
                <use href="#res" x="912" y="311.500" /><use href="#res" x="964" y="311.500" /><use href="#res" x="1027" y="356.500" />
                <use href="#res" transform="translate(237.500 411) rotate(90)" /><use href="#res" transform="translate(263.500 423) rotate(90)" /><use href="#res" transform="translate(314.500 447) rotate(90)" /><use href="#res" transform="translate(544.500 422) rotate(90)" /><use href="#res" transform="translate(935.500 397) rotate(90)" />
                <use href="#gnd" x="154" y="343" /><use href="#gnd" x="128" y="471" /><use href="#gnd" x="339" y="362" /><use href="#gnd" x="32" y="517" /><use href="#gnd" x="762" y="452" /><use href="#gnd" x="858" y="420" /><use href="#gnd" x="935" y="433" />
                <use href="#opamp" x="320" y="389" /><use href="#opamp" x="595" y="382" /><use href="#opamp" x="813" y="369" /><use href="#opamp" x="972" y="357" />
                <path class="t" d="M132 430h5M134.500 427v5" />
                <path class="pin" d="M153 291.500h2M153 323.500h2M153 337.500h2M300 285.500h2M332 285.500h2M313 369.500h2M313 407.500h2M313 464.500h2M281 432.500h2M295 401.500h2M31 471.500h3M31 503.500h3M127 458.500h3M569 368.500h2M588 350.500h2M588 401.500h2M761 394.500h2M761 426.500h2M761 431.500h2M761 446.500h2M838 369.500h2M896 369.500h3M928 369.500h2M838 401.500h2M857 414.500h2M985 330.500h3M473 439.500h3M805 337.500h2M965 338.500h2" />
                <path class="node" d="M197 284h4v4h-4zM229 284h4v4h-4zM299 329h4v4h-4zM267 373h4v4h-4zM286 373h4v4h-4zM235 424h4v4h-4zM261 463h4v4h-4zM280 463h4v4h-4zM280 424h4v4h-4zM312 424h4v4h-4zM388 393h4v4h-4zM401 393h4v4h-4zM478 393h4v4h-4zM542 329h4v4h-4zM542 393h4v4h-4zM587 411h4v4h-4zM625 379h4v4h-4zM696 379h4v4h-4zM760 379h4v4h-4zM760 315h4v4h-4zM843 315h4v4h-4zM843 367h4v4h-4zM805 399h4v4h-4zM933 309h4v4h-4zM933 367h4v4h-4zM997 354h4v4h-4z" />
                <!-- labels -->
                <text x="148" y="277">P1 10k</text><text x="246" y="278">R10 10k</text><text x="329" y="273">D1 1N4933</text>
                <text x="215" y="318">T1 2N5459</text><text x="265" y="323">R11 10k</text><text x="323" y="323">R12 18.2k</text>
                <text x="357" y="358">U4 OPA227</text><text x="317" y="406">J1</text><text x="365" y="416">C9 1u</text><text x="326" y="447">R15 10k</text>
                <text x="141" y="442">Vin 1</text><text x="35" y="444">J1</text><text x="42" y="486">V2 5</text>
                <text x="431" y="380">C1 150n</text><text x="499" y="384">C2 33n</text><text x="499" y="321">R2 4.12k</text><text x="573" y="315">U1 OPA227</text>
                <text x="598" y="392">Cbypass 10n</text><text x="598" y="438">J1</text><text x="653" y="374">R4 1.33k</text><text x="717" y="374">R3 15.8k</text>
                <text x="723" y="307">C4 33n</text><text x="722" y="426">C5 4.7n</text><text x="861" y="362">R5 100k</text><text x="902" y="358">C6 100n</text>
                <text x="841" y="389">C3 10u</text><text x="846" y="394">U2 OPA227</text><text x="809" y="432">J1</text><text x="899" y="304">R7 1k</text><text x="950" y="304">R8 10k</text>
                <text x="1014" y="349">R9 50</text><text x="1005" y="381">U3 OPA227</text><text x="969" y="381">J1</text>
                <text class="purple" x="400" y="413">VF1</text><text class="purple" x="842" y="278">VF2</text><text class="purple" x="1069" y="357">Vout</text>
                <text transform="translate(143 317) rotate(-90)">C7 1u</text><text transform="translate(209 427) rotate(-90)">R14 10k</text><text transform="translate(255 436) rotate(-90)">R16 10k</text>
                <text transform="translate(306 461) rotate(-90)">R13 10k</text><text transform="translate(272 496) rotate(-90)">C8 1u</text><text transform="translate(454 457) rotate(-90)">Voffset 2.5</text>
                <text transform="translate(537 433) rotate(-90)">R1 13.7k</text><text transform="translate(928 410) rotate(-90)">R6 1k</text>
                <path class="b" d="M630 284.500H676.500V297M960.500 409V421.500H982" />
                <text class="blue" x="633" y="293">band pass</text><text class="blue" x="962" y="417">amp</text>
              </svg>
            </div>
            <div class="vscroll"><i class="up"></i><i class="thumb"></i><i class="down"></i></div>
          </div>
          <div class="hscroll"><i class="back"></i><i class="bar"></i><i class="fwd"></i></div>
          <div class="sheets"><button>speech filter</button><button class="last">filters etc</button></div>
          <footer class="status">
            <button class="tool" aria-label="Multimeter"><svg><use href="#meter" /></svg></button>
            <button class="tool" aria-label="Oscilloscope"><svg viewBox="0 0 18 14"><path d="M1 3l3-2 3 3 4-2 5 1" fill="none" stroke="#c00"/><path d="M1 12V6M5 6v6M9 6v6M13 6v6M1 9h14" fill="none" stroke="#00f"/></svg></button>
            <span class="exit">Exit</span>
            <span class="coords">X: 903 Y: 460</span>
          </footer>
        </div>

        <section class="analyzer signal">
          <header class="glass">
            <svg class="app-icon"><use href="#graph" /></svg>
            <span>Noname - Signal Analyzer11</span>
            <div class="win-btns">
              <button aria-label="Minimize"><svg><use href="#w-min" /></svg></button>
              <button aria-label="Maximize"><svg><use href="#w-box" /></svg></button>
              <button class="close" aria-label="Close"><svg><use href="#w-x" /></svg></button>
            </div>
          </header>
          <div class="pane">
            <nav class="menubar"><a href="#">File</a><a href="#">Edit</a><a href="#">View</a><a href="#" class="off">Process</a><a href="#">Help</a></nav>
            <div class="toolbar">
              <div class="group files">
                <button aria-label="Open"><svg><use href="#open3" /></svg></button>
                <button aria-label="Save"><svg><use href="#save" /></svg></button>
              </div>
              <div class="group">
                <button aria-label="Copy"><svg><use href="#copy2" /></svg></button>
                <button aria-label="Paste"><svg><use href="#paste" /></svg></button>
              </div>
              <div class="group">
                <button class="pressed" aria-label="Select"><svg><use href="#pointer" /></svg></button>
                <button aria-label="Zoom in"><svg><use href="#zoom" /></svg></button>
                <button aria-label="Zoom 100%"><svg><use href="#zoom100" /></svg></button>
                <button class="faded" aria-label="Grid"><svg><use href="#dots" /></svg></button>
                <button aria-label="Text"><svg><use href="#text" /></svg></button>
                <button aria-label="Auto label"><svg><use href="#probe1" /></svg></button>
                <button aria-label="Marker label"><svg><use href="#probe2" /></svg></button>
                <button aria-label="Legend"><svg><use href="#legend" /></svg></button>
                <button aria-label="Line"><svg><use href="#line" /></svg></button>
                <button aria-label="Ellipse"><svg><use href="#circle" /></svg></button>
              </div>
              <div class="group">
                <button aria-label="Cursor a"><svg><use href="#cura" /></svg></button>
                <button aria-label="Cursor b"><svg><use href="#curb" /></svg></button>
              </div>
              <div class="group">
                <button aria-label="Add curves"><svg><use href="#curves" /></svg></button>
                <button aria-label="Pick curve"><svg><use href="#pick" /></svg></button>
                <button aria-label="Marker"><svg><use href="#flag3" /></svg></button>
              </div>
              <div class="spin">
                <button aria-label="Left"><svg><use href="#triL" /></svg></button>
                <span><button aria-label="Up"><i class="up"></i></button><button aria-label="Down"><i class="down"></i></button></span>
                <button aria-label="Right"><svg><use href="#triR" /></svg></button>
              </div>
            </div>
            <svg class="plot" viewBox="67 570 439 270" width="439" height="270">
              <use href="#decade" x="123" y="585" /><use href="#decade" x="196" y="585" /><use href="#decade" x="268" y="585" /><use href="#decade" x="341" y="585" /><use href="#decade" x="414" y="585" />
              <path class="grid" d="M124 654.500H487M124 723.500H487" />
              <path d="M486.500 585V793" stroke="#c0c0c0" />
              <path class="axis" d="M123.500 585V801M117 654.500h6M117 723.500h6M120 620.500h3M120 689.500h3M120 758.500h3M121 593.500h2M121 600.500h2M121 607.500h2M121 614.500h2M121 627.500h2M121 634.500h2M121 641.500h2M121 648.500h2M121 662.500h2M121 669.500h2M121 676.500h2M121 683.500h2M121 696.500h2M121 703.500h2M121 710.500h2M121 717.500h2M121 731.500h2M121 738.500h2M121 745.500h2M121 752.500h2M121 765.500h2M121 772.500h2M121 779.500h2M121 786.500h2" />
              <use href="#ticks" x="123" y="793" /><use href="#ticks" x="196" y="793" /><use href="#ticks" x="268" y="793" /><use href="#ticks" x="341" y="793" /><use href="#ticks" x="414" y="793" />
              <path d="M124 628L145 626 167 624 185 623 205 622H487" fill="none" stroke="#008000" stroke-width="2" />
              <path d="M124 669L150 656 180 642 200 634 215 629 230 624 250 622H290L305 625 325 631 345 638 375 650 400 659 425 668 434 670 445 669 465 665 487 660" fill="none" stroke="#808000" stroke-width="2" />
              <path d="M124 754L145 746 168 738 200 730 220 726 232 725 250 727 270 731 295 735 320 742 355 749 390 756 412 761 428 762 440 760 460 752 487 742" fill="none" stroke="#000080" stroke-width="2" />
              <path d="M223 648h99v53h-99z" fill="#fff" /><path class="axis" d="M223.500 648V701.500H322" />
              <path d="M228 656.500H280" stroke="#008000" stroke-width="2" /><path d="M228 673.500H280" stroke="#808000" /><path d="M228 691H280" stroke="#000080" stroke-width="2" />
              <text class="leg" x="285" y="661">VF1</text><text class="leg" x="285" y="678">VF2</text><text class="leg" x="285" y="696">Vout</text>
              <text class="tick end" x="116" y="589">0.0</text><text class="tick end" x="116" y="658">-100.0</text><text class="tick end" x="116" y="727">-200.0</text><text class="tick end" x="116" y="797">-300.0</text>
              <text class="tick" x="128" y="813">10.0</text><text class="tick" x="204" y="813">100.0</text><text class="tick" x="275" y="813">1.0k</text><text class="tick" x="349" y="813">10.0k</text><text class="tick" x="425" y="813">100.0k</text><text class="tick" x="491" y="813">1.0M</text>
              <text class="name" x="278" y="828">Frequency [Hz]</text>
              <text class="name" transform="translate(79 708) rotate(-90)">Gain [dB]</text>
            </svg>
          </div>
        </section>

        <footer class="taskbar">
          <button class="start" aria-label="Start"><svg><use href="#orb" /></svg></button>
          <button aria-label="Internet Explorer"><svg><use href="#ie" /></svg></button>
          <button aria-label="Explorer"><svg><use href="#folder" /></svg></button>
          <button aria-label="Media Player"><svg><use href="#media" /></svg></button>
          <button class="running" aria-label="Paint"><svg><use href="#paint" /></svg></button>
          <button aria-label="Designer"><svg><use href="#gems" /></svg></button>
          <button class="vb" aria-label="Visual Basic"><svg viewBox="0 0 32 32"><path d="M5 4h22v19H5z" fill="#dcebfa" stroke="#234f9c" stroke-width="3"/><path d="M12 26h12v-3l6 5-6 4v-2H12z" fill="#2c5aa8"/><text x="8" y="17">V</text><text x="16" y="20">B</text></svg></button>
          <button class="running" aria-label="Skype"><svg><use href="#skype" /></svg></button>
          <button class="running lit" aria-label="TINA"><svg><use href="#tinabig" /></svg></button>
          <div class="tray">
            <svg><use href="#t-up" /></svg><svg><use href="#t-flag" /></svg><svg><use href="#t-net" /></svg><svg><use href="#t-snd" /></svg>
            <div class="clock">6:43 AM<br />5/1/2011</div>
            <button class="peek" aria-label="Show desktop"></button>
          </div>
        </footer>
      </div>
    </div>
  </body>
</html>
```

FILE: styles.css
```css
* {
  box-sizing: border-box;
}

body {
  margin: 0;
  font-family: "Liberation Sans", Arial, sans-serif;
  overflow: hidden;
}

.sprite {
  position: absolute;
  width: 0;
  height: 0;
}

button {
  font-family: inherit;
  padding: 0;
  margin: 0;
  border: none;
  background: #efefef;
  color: #000;
}

button svg {
  display: block;
  width: 100%;
  height: 100%;
}

/* sizes: a full screen and a reduced one on top of it */
.screen {
  --title: 22px;
  --menu: 19px;
  --bar: 30px;
  --palette: 38px;
  --tabs: 22px;
  --scroll: 16px;
  --sheets: 21px;
  --status: 24px;
  --task: 40px;
  --btn: 24px;
  --ui: 12px;
  --label: 11px;
  --caption: 12px;
  --menu-gap: 12px;
  --gap: 7px;
  position: relative;
  display: flex;
  flex-direction: column;
  height: 100vh;
  overflow: hidden;
}

.small {
  --title: 18px;
  --menu: 15px;
  --bar: 24px;
  --palette: 31px;
  --tabs: 17px;
  --scroll: 13px;
  --sheets: 18px;
  --status: 19px;
  --task: 31px;
  --btn: 19px;
  --ui: 10px;
  --label: 9px;
  --caption: 9px;
  --menu-gap: 9px;
  --gap: 6px;
  position: absolute;
  left: 0;
  top: 147px;
  width: 80%;
  height: 80vh;
}

.editor {
  flex: 1;
  display: flex;
  flex-direction: column;
  min-height: 0;
  background: #efefef;
}

/* title bar */
.titlebar {
  display: flex;
  align-items: center;
  height: var(--title);
  border-bottom: 1px solid #0c2f57;
  background:
    radial-gradient(8% 80% at 7% 50%, rgba(200, 220, 240, 0.75) 50%, transparent),
    radial-gradient(3% 90% at 13% 100%, #7fdcf8 20%, transparent),
    radial-gradient(3% 90% at 18% 100%, #c4d8ec 40%, transparent),
    radial-gradient(3% 80% at 23% 100%, #9b9691 50%, transparent),
    linear-gradient(100deg, #3a76bd 0, #1552a4 25%, #1a5cac 45%, #2668b0 58%, #125296 64%, #1f62ac 70%, #0f4a90 76%, #2a659f 90%, #1a5798);
}

.app-icon {
  width: calc(var(--title) - 6px);
  height: calc(var(--title) - 6px);
}

.caption {
  flex: 1;
  padding-left: 5px;
  font: var(--caption) "Noto Sans", sans-serif;
}

.win-btns {
  display: flex;
  align-self: flex-start;
  height: calc(var(--title) - 4px);
  margin-right: 3px;
  border: 1px solid #7d9fc8;
  border-top: none;
  border-radius: 0 0 4px 4px;
  overflow: hidden;
}

.win-btns button {
  width: calc(var(--btn) + 3px);
  background: rgba(110, 150, 190, 0.4);
  border-right: 1px solid #7d9fc8;
}

.win-btns .close {
  width: calc(var(--btn) * 2 - 1px);
  border: none;
}

.win-btns svg {
  width: calc(var(--title) - 6px);
  height: calc(var(--title) - 6px);
  margin: 0 auto;
}

/* menu */
.menubar {
  display: flex;
  align-items: center;
  gap: var(--menu-gap);
  height: var(--menu);
  padding-left: 7px;
  background: linear-gradient(#fff 0, #eef1f9 30%, #d5dcef 35%, #dfe5f6 90%);
  border-bottom: 1px solid #b6bccb;
}

.small .menubar {
  padding-left: 5px;
}

.menubar a {
  font: var(--ui) "Noto Sans", sans-serif;
  color: #6d6d6d;
  text-decoration: none;
}

/* toolbar */
.toolbar {
  display: flex;
  align-items: center;
  gap: var(--gap);
  height: var(--bar);
  padding-left: 6px;
  border-top: 1px solid #fff;
  border-bottom: 1px solid #9a9a9a;
}

.small .toolbar {
  padding-left: 4px;
}

.group {
  display: flex;
}

.spaced {
  gap: 1px;
  margin-right: -3px;
}

.tools {
  margin-left: 7px;
}

.small .spaced {
  margin-right: -1px;
}

.small .tools {
  margin-left: 3px;
}

.toolbar button {
  width: var(--btn);
  height: var(--btn);
  border: 1px solid #fff;
  border-right-color: #777;
  border-bottom-color: #777;
  box-shadow: inset -1px -1px #bbb;
}

.toolbar .pressed {
  background: #f8f8f8;
  border-color: #777 #fff #fff #777;
  box-shadow: none;
}

.combo {
  display: flex;
  height: 20px;
  border: 1px solid #777;
  border-right-color: #ddd;
  border-bottom-color: #ddd;
  background: #fff;
}

.small .combo {
  height: 16px;
}

.combo select {
  flex: 1;
  min-width: 0;
  appearance: none;
  border: none;
  padding: 0 2px;
  background: #fff;
  color: #000;
  font: var(--label) "Liberation Sans", Arial, sans-serif;
}

.scale {
  width: 59px;
}

.small .scale {
  width: 47px;
}

.arrow {
  width: calc(var(--btn) - 8px);
  display: flex;
  align-items: center;
  justify-content: center;
  background: #efefef;
  border: 1px solid #fff;
  border-right-color: #777;
  border-bottom-color: #777;
}

.arrow::before,
.down::before {
  content: "";
  border: 4px solid transparent;
  border-top-color: #000;
  border-bottom: none;
}

.up::before {
  content: "";
  border: 4px solid transparent;
  border-bottom-color: #000;
  border-top: none;
}

.small .arrow::before,
.small .up::before,
.small .down::before {
  border-left-width: 3px;
  border-right-width: 3px;
}

.finder {
  display: flex;
  align-items: center;
  gap: 5px;
  width: 13.3%;
  height: 100%;
  margin-left: auto;
  padding: 0 7px 0 5px;
  border-left: 1px solid #9a9a9a;
}

.small .finder {
  padding-left: 4px;
}

.finder .combo {
  flex: 1;
}

/* component palette */
.palette {
  display: flex;
  gap: 1px;
  height: var(--palette);
  padding: 2px 1.5% 3px 5px;
  border-top: 1px solid #fff;
  border-bottom: 1px solid #fff;
}

.small .palette {
  padding: 1px 1.5% 3px 4px;
}

.cells {
  flex: 1;
  display: grid;
  grid-template-columns: repeat(42, 1fr);
  grid-template-rows: 100%;
  border-top: 1px solid #666;
  border-bottom: 1px solid #fff;
  background: linear-gradient(to left, #000 1px, transparent 1px) 0 0 / calc(100% / 42) 100%;
}

.cells button {
  min-width: 0;
  min-height: 0;
  background: none;
  border-left: 1px solid #fff;
}

.cells .on {
  background: #f6f6f6;
  border-top: 1px solid #999;
  border-left-color: #999;
  margin-right: 1px;
}

.nudge {
  width: 11px;
  border: 1px solid #fff;
  border-right: 2px solid #888;
  border-bottom-color: #888;
}

.small .nudge {
  width: 9px;
}

/* tabs */
.tabs {
  display: flex;
  align-items: flex-start;
  gap: 2px;
  height: var(--tabs);
  padding-left: 4px;
  border-bottom: 1px solid #999;
}

.tabs button,
.sheets button {
  height: calc(var(--tabs) - 5px);
  padding: 0 3px;
  font-size: var(--label);
  border-right: 2px solid #888;
  border-bottom: 1px solid #888;
  border-left: 1px solid #fff;
  border-radius: 0 0 3px 3px;
  white-space: nowrap;
}

.small .tabs button {
  padding: 0 1px;
}

.tabs .active {
  height: calc(var(--tabs) - 3px);
  padding: 3px 7px 0 5px;
}

.small .tabs .active {
  padding: 2px 5px 0 4px;
}

/* drawing area */
.work {
  flex: 1;
  display: flex;
  min-height: 0;
}

.sheet {
  flex: 1;
  min-width: 0;
  overflow: hidden;
  background:
    linear-gradient(to right, transparent 1px, #fff 1px) 0 2px / 8px 8px,
    linear-gradient(#b4b4b4 1px, #fff 1px) 0 2px / 8px 8px;
}

/* the reduced grid loses every fifth row and column */
.small .sheet {
  background:
    linear-gradient(to right, transparent 1px, #fff 1px 7px, transparent 7px 8px, #fff 8px 13px, transparent 13px 14px, #fff 14px 19px, transparent 19px 20px, #fff 20px) 0 0 / 32px 32px,
    linear-gradient(#b4b4b4 1px, #fff 1px 6px, #b4b4b4 6px 7px, #fff 7px 13px, #b4b4b4 13px 14px, #fff 14px 19px, #b4b4b4 19px 20px, #fff 20px) 0 27px / 32px 32px;
}

.drawing {
  display: block;
}

.drawing text {
  font-size: 9px;
  fill: #008080;
}

.drawing .purple {
  fill: #800080;
}

.drawing .blue {
  fill: #0000ff;
}

.drawing .big {
  font-size: 11px;
}

.w,
.g,
.b,
.t,
.pin,
.grid,
.axis {
  fill: none;
  shape-rendering: crispEdges;
}

.w {
  stroke: #400000;
}

.g {
  stroke: #008000;
}

.b {
  stroke: #0000ff;
}

.t {
  stroke: #008080;
}

.pin {
  stroke: #ff0000;
  stroke-width: 2;
  stroke-dasharray: 1 1;
}

.node {
  fill: #300000;
}

.grid {
  stroke: #c0c0c0;
  stroke-dasharray: 4 3;
}

.axis {
  stroke: #000;
}

/* scroll bars */
.vscroll {
  display: flex;
  flex-direction: column;
  align-items: center;
  width: var(--scroll);
  padding: 6px 0;
  background: #ececec;
}

.vscroll .thumb {
  width: 100%;
  height: 40px;
  margin: 12px 0 auto;
  border: 1px solid #979797;
  border-radius: 2px;
  background:
    repeating-linear-gradient(#666 0 1px, #eee 1px 3px) center / 7px 8px no-repeat,
    linear-gradient(to right, #fafafa, #dcdcdc 60%, #c4c4c8);
}

.small .vscroll .thumb {
  height: 32px;
  margin-top: 7px;
}

.vscroll i::before {
  display: block;
}

.vscroll .up::before,
.vscroll .down::before {
  border-left-width: 3px;
  border-right-width: 3px;
}

.hscroll {
  display: flex;
  align-items: center;
  height: var(--scroll);
  padding: 0 calc(var(--scroll) + 5px) 0 4px;
  border-bottom: 1px solid #fff;
  background: #e9e9e9;
}

.bar {
  width: 440px;
  height: 100%;
  margin-left: 6px;
  border: 1px solid #979797;
  border-radius: 2px;
  background: linear-gradient(#f8f8f8, #d4d4d4);
}

.back::before,
.fwd::before {
  content: "";
  display: block;
  border: 3px solid transparent;
}

.back::before {
  border-right: 4px solid #555;
  border-left: none;
}

.fwd {
  margin-left: auto;
}

.fwd::before {
  border-left: 4px solid #333;
  border-right: none;
}

/* sheet tabs and status line */
.sheets {
  display: flex;
  align-items: flex-start;
  height: var(--sheets);
  padding-left: 3px;
  border-bottom: 1px solid #aaa;
}

.sheets button {
  height: 13px;
  padding: 0 2px;
}

.sheets .last {
  width: 478px;
  text-align: right;
}

.status {
  display: flex;
  align-items: center;
  height: var(--status);
  padding-left: 3px;
  border-bottom: 2px solid #999;
  font-size: var(--ui);
}

.coords {
  flex: 0 0 7%;
  align-self: stretch;
  display: flex;
  align-items: center;
  margin-left: auto;
  padding-left: 2px;
  border-left: 1px solid #999;
  white-space: nowrap;
}

.small .status {
  font-size: 9px;
}

.tool {
  width: 19px;
  height: 15px;
  margin-right: 5px;
  border: 1px solid #888;
}

.exit {
  padding-left: 3px;
}

/* analyzer windows */
.analyzer {
  position: absolute;
  display: flex;
  flex-direction: column;
  border: 1px solid #1d2b3a;
  border-radius: 6px 6px 4px 4px;
  background: linear-gradient(100deg, #d3e6f8, #b9d9f8 30%, #cfe3f8 60%, #b4d5f5);
  box-shadow: 2px 3px 12px 3px rgba(0, 0, 0, 0.75);
}

.noise {
  top: 385px;
  right: 95px;
  width: 264px;
  height: 448px;
  padding: 0 6px 6px;
}

.signal {
  left: 62px;
  top: 353px;
  width: 449px;
  height: 350px;
  padding: 0 4px;
}

.glass {
  display: flex;
  align-items: center;
  height: 28px;
  font: var(--caption) "Noto Sans", sans-serif;
}

.signal .glass {
  height: 22px;
  gap: 5px;
}

.glass .win-btns {
  height: 18px;
  margin: 0 -1px 0 auto;
  border-color: #5d6f85;
}

.small .glass .win-btns {
  height: 14px;
}

.glass .win-btns button {
  background: linear-gradient(#dbe5f0 45%, #a9bdd3 50%, #c6d7e8);
  border-color: #5d6f85;
}

.glass .win-btns .close {
  background: linear-gradient(#e5a091 45%, #bc3a22 50%, #d98068);
}

.small .glass .win-btns .close {
  width: 38px;
}

.pane {
  flex: 1;
  display: flex;
  flex-direction: column;
  min-height: 0;
  border: 1px solid #5d6f85;
  border-left: none;
  background: #fff;
}

.pane .menubar {
  height: 21px;
  flex: none;
}

.small .pane .menubar {
  height: 16px;
  gap: 11px;
}

.pane .menubar a {
  color: #000;
}

.pane .menubar .off {
  color: #777;
}

.pane .toolbar {
  flex: none;
  height: 36px;
  gap: 5px;
  background: #efefef;
}

.noise .toolbar {
  justify-content: flex-end;
  padding-right: 7px;
}

.small .pane .toolbar {
  height: 30px;
}

.files {
  margin-right: 4px;
}

.faded {
  opacity: 0.4;
}

.spin {
  display: flex;
  align-items: center;
}

.spin span {
  display: flex;
  flex-direction: column;
}

.toolbar .spin button {
  width: 13px;
  height: 20px;
}

.toolbar .spin span button {
  width: 20px;
  height: 12px;
  display: flex;
  align-items: center;
  justify-content: center;
}

.small .toolbar .spin button {
  width: 11px;
  height: 16px;
}

.small .toolbar .spin span button {
  width: 16px;
  height: 10px;
}

.spin i::before {
  display: block;
}

.plot {
  display: block;
  flex: none;
}

.tick {
  font-size: 11px;
  font-style: italic;
  text-anchor: middle;
}

.tick.big {
  font-size: 13px;
}

.end {
  text-anchor: end;
}

.leg {
  font-size: 13px;
}

.name {
  font-size: 11px;
}

.foot {
  display: flex;
  height: 17px;
  margin-top: auto;
  background: #efefef;
}

.foot .out {
  width: 136px;
  padding-right: 4px;
  text-align: right;
  font-size: 11px;
  margin-right: auto;
  border-right: 2px solid #777;
}

.foot .step {
  width: 17px;
  border: 1px solid #fff;
  border-right-color: #777;
  border-bottom-color: #777;
}

/* taskbar */
.taskbar {
  position: relative;
  display: flex;
  align-items: center;
  gap: 2px;
  height: var(--task);
  border-top: 1px solid #16304d;
  background:
    linear-gradient(40deg, transparent 42%, #9cc8ee 50%, transparent 58%) 75% 0 / 70px 40px no-repeat,
    linear-gradient(100deg, #2b7fc0 0, #3a95d2 30%, #2f86c6 70%, #2470b8 76%, #1c5fac 82%, #1a5aa6 90%, #123a68 94%, #15365f);
}

/* the analyzer's glass frame shows through behind the buttons */
.small .taskbar {
  background:
    linear-gradient(to right, transparent 5%, rgba(10, 40, 80, 0.5) 6%, rgba(150, 180, 215, 0.5) 10%, rgba(130, 160, 200, 0.4) 41%, rgba(10, 40, 80, 0.5) 44%, transparent 46%) 0 0 / 100% 50% no-repeat,
    linear-gradient(to right, transparent 5%, rgba(10, 40, 80, 0.5) 8%, rgba(10, 40, 80, 0.5) 42%, transparent 46%),
    linear-gradient(100deg, #1e5f9c 0, #3f8cc8 20%, #2f86c6 45%, #2272b6 70%, #1c5fac 82%, #15427a 90%, #15365f);
}

.taskbar button {
  width: 60px;
  height: 100%;
  background: none;
}

.small .taskbar button {
  width: 48px;
}

.taskbar button svg {
  width: calc(var(--task) - 7px);
  height: calc(var(--task) - 5px);
  margin: 0 auto;
}

.taskbar .start {
  width: 56px;
}

.small .taskbar .start {
  width: 42px;
}

.taskbar .start svg {
  width: calc(var(--task) - 2px);
  height: calc(var(--task) - 2px);
}

.vb text {
  font-size: 11px;
  font-weight: bold;
  fill: #16407c;
}

.taskbar .running {
  border: 1px solid rgba(255, 255, 255, 0.5);
  border-radius: 2px;
  background: linear-gradient(135deg, rgba(255, 255, 255, 0.4), rgba(255, 255, 255, 0.1));
}

.taskbar .lit {
  background: linear-gradient(135deg, rgba(255, 255, 255, 0.85), rgba(190, 220, 240, 0.5));
}

.tray {
  display: flex;
  align-items: center;
  gap: 9px;
  height: 100%;
  margin-left: auto;
}

.tray svg {
  width: 16px;
  height: 16px;
}

.small .tray {
  gap: 7px;
}

.small .tray svg {
  width: 13px;
  height: 13px;
}

.clock {
  width: 66px;
  padding-left: 4px;
  font: 12px/17px "Noto Sans", sans-serif;
  color: #fff;
  text-align: center;
}

.small .clock {
  width: 53px;
  font-size: 9px;
  line-height: 13px;
}

.taskbar .peek {
  width: 14px;
  margin-left: -5px;
  border: 1px solid #6d8fb0;
  background: linear-gradient(135deg, #5f7f9f, #17375c);
}

.small .taskbar .peek {
  width: 11px;
}
```
